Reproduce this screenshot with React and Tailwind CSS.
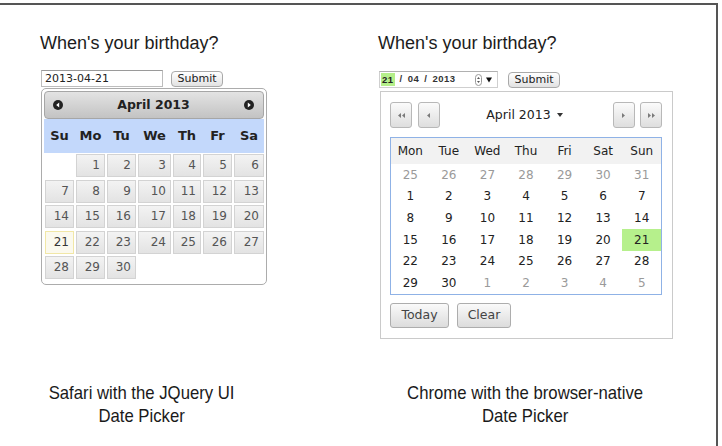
import React from 'react';

const sans = "font-['Liberation_Sans',Arial,sans-serif]";
const verdana = "font-['DejaVu_Sans',Verdana,sans-serif]";

// jQuery UI columns are sized by the table, so "We" ends up wider
const jqCols = 'grid grid-cols-[31px_31px_31px_35px_30px_31px_32px]';

const jqWeekdays = ['Su', 'Mo', 'Tu', 'We', 'Th', 'Fr', 'Sa'];
const jqDays = [null, 1, 2, 3, 4, 5, 6, 7, 8, 9, 10, 11, 12, 13, 14, 15, 16, 17, 18, 19, 20, 21, 22, 23, 24, 25, 26, 27, 28, 29, 30];

const CircleArrow = ({ dir }) => (
  <svg width="10" height="10" viewBox="0 0 10 10">
    <circle cx="5" cy="5" r="5" fill="#222" />
    {dir === 'left'
      ? <path d="M6.2 2.6 L3.2 5 L6.2 7.4 Z" fill="#fff" />
      : <path d="M3.8 2.6 L6.8 5 L3.8 7.4 Z" fill="#fff" />}
  </svg>
);

const JQueryPicker = () => (
  <div className="ml-[41px] w-[226px] pt-[27px] flex flex-col">
    <h1 className={`${sans} -ml-px text-[18px] leading-[22px] text-[#1c1c1c]`}>When's your birthday?</h1>

    <div className="mt-[16px] flex items-start">
      <div className={`${verdana} w-[122px] h-[17px] border border-[#bdbdbd] border-t-[#9a9a9a] pl-[3px] text-[11px] leading-[15px] text-[#222]`}>
        2013-04-21
      </div>
      <div className={`${verdana} ml-[8px] mt-px w-[52px] h-[16px] rounded-[4px] border border-[#a9a9a9] bg-linear-to-b from-white to-[#e2e2e2] text-center text-[11px] leading-[14px] text-[#222]`}>
        Submit
      </div>
    </div>

    <div className={`${verdana} mt-px w-[226px] rounded-[5px] border border-[#acacac] bg-white p-[2px]`}>
      <div className="h-[28px] flex items-center justify-between pl-[8px] pr-[9px] rounded-[4px] border border-[#a6a6a6] bg-linear-to-b from-[#e3e3e3] to-[#c3c3c3]">
        <CircleArrow dir="left" />
        <span className="text-[12.5px] font-bold text-[#222]">April 2013</span>
        <CircleArrow dir="right" />
      </div>

      <div className={`${jqCols} h-[34px] items-center bg-[#c3d8fb]`}>
        {jqWeekdays.map((d) => (
          <span key={d} className="text-center text-[13px] font-bold text-[#222]">{d}</span>
        ))}
      </div>

      <div className={`${jqCols} mt-px mb-[3px] gap-y-[2.5px]`}>
        {jqDays.map((day, i) => {
          if (!day) return <div key={i} />;
          const active = day === 21;
          return (
            <div
              key={i}
              className={`mx-px h-[23px] border pr-[4px] text-right text-[12px] leading-[21px] ${
                active
                  ? 'border-[#f1e7a6] bg-[#fbf9ee] text-[#363636]'
                  : 'border-[#d3d3d3] bg-linear-to-b from-[#f3f3f3] to-[#e3e3e3] text-[#555]'
              }`}
            >
              {day}
            </div>
          );
        })}
      </div>
    </div>
  </div>
);

const nativeWeekdays = ['Mon', 'Tue', 'Wed', 'Thu', 'Fri', 'Sat', 'Sun'];
const nativeDays = [
  ...[25, 26, 27, 28, 29, 30, 31].map((d) => ({ d, muted: true })),
  ...Array.from({ length: 30 }, (_, i) => ({ d: i + 1, muted: false })),
  ...[1, 2, 3, 4, 5].map((d) => ({ d, muted: true })),
];

const NavArrow = ({ dir, double }) => (
  <svg width={double ? 7 : 4} height="5" viewBox={double ? '0 0 7 5' : '0 0 4 5'}>
    {dir === 'left' ? (
      <>
        <path d="M3 0 L0 2.5 L3 5 Z" fill="#7a7a7a" />
        {double && <path d="M7 0 L4 2.5 L7 5 Z" fill="#7a7a7a" />}
      </>
    ) : (
      <>
        <path d="M0 0 L3 2.5 L0 5 Z" fill="#7a7a7a" />
        {double && <path d="M4 0 L7 2.5 L4 5 Z" fill="#7a7a7a" />}
      </>
    )}
  </svg>
);

const NavButton = ({ children }) => (
  <div className="w-[22px] h-[26px] flex items-center justify-center rounded-[3px] border border-[#b8b8b8] bg-linear-to-b from-[#fbfbfb] to-[#dedede]">
    {children}
  </div>
);

const NativePicker = () => (
  <div className="ml-[112px] w-[294px] pt-[27px] flex flex-col">
    <h1 className={`${sans} -ml-px text-[18px] leading-[22px] text-[#1c1c1c]`}>When's your birthday?</h1>

    <div className="mt-[17px] flex items-start">
      <div className="w-[119px] h-[17px] flex items-center border border-[#cfcfcf] border-t-[#b0b0b0] pl-px">
        <span className={`${sans} flex items-center text-[9.5px] font-bold tracking-[0.5px] text-[#333]`}>
          <span className="bg-[#b5ef8a] px-px leading-[13px] text-[#222]">21</span>
          <span className="mx-[5px]">/</span>
          <span>04</span>
          <span className="mx-[5px]">/</span>
          <span>2013</span>
        </span>
        <svg className="ml-[19px]" width="7" height="12" viewBox="0 0 7 12">
          <rect x="0.5" y="0.5" width="6" height="11" rx="3" fill="#fff" stroke="#9a9a9a" />
          <path d="M2 5 L3.5 3 L5 5 Z" fill="#555" />
          <path d="M2 7 L3.5 9 L5 7 Z" fill="#555" />
        </svg>
        <svg className="ml-[4px]" width="6" height="6" viewBox="0 0 6 6">
          <path d="M0 0.5 L6 0.5 L3 5.5 Z" fill="#111" />
        </svg>
      </div>
      <div className={`${verdana} ml-[10px] mt-px w-[52px] h-[16px] rounded-[4px] border border-[#a9a9a9] bg-linear-to-b from-white to-[#e2e2e2] text-center text-[11px] leading-[14px] text-[#222]`}>
        Submit
      </div>
    </div>

    <div className={`${verdana} mt-[3px] ml-px w-[293px] border border-[#cacaca] bg-white pt-[10px] pb-[10px] pl-[9px] pr-[10px]`}>
      <div className="h-[26px] flex items-center">
        <NavButton><NavArrow dir="left" double /></NavButton>
        <div className="ml-[6px]"><NavButton><NavArrow dir="left" /></NavButton></div>
        <div className="flex-1 flex items-center justify-center pr-[4px] text-[12.5px] text-[#222]">
          April 2013
          <svg className="ml-[6px]" width="6" height="4" viewBox="0 0 6 4">
            <path d="M0 0 L6 0 L3 4 Z" fill="#333" />
          </svg>
        </div>
        <NavButton><NavArrow dir="right" /></NavButton>
        <div className="ml-[5px]"><NavButton><NavArrow dir="right" double /></NavButton></div>
      </div>

      <div className="mt-[9px] w-[272px] border border-[#8fb2e6]">
        <div className="grid grid-cols-7 h-[26px] items-center bg-[#f2f2f2]">
          {nativeWeekdays.map((d) => (
            <span key={d} className="text-center text-[12px] text-[#222]">{d}</span>
          ))}
        </div>
        <div className="grid grid-cols-7">
          {nativeDays.map(({ d, muted }, i) => (
            <div
              key={i}
              className={`h-[21.66px] flex items-center justify-center text-[12px] ${
                muted ? 'text-[#9a9a9a]' : 'text-[#222]'
              } ${!muted && d === 21 ? 'bg-[#b6f08c]' : ''}`}
            >
              {d}
            </div>
          ))}
        </div>
      </div>

      <div className="mt-[8px] flex">
        <div className="w-[59px] h-[25px] flex items-center justify-center rounded-[3px] border border-[#adadad] bg-linear-to-b from-[#fafafa] to-[#dcdcdc] text-[12.5px] text-[#444]">
          Today
        </div>
        <div className="ml-[8px] w-[54px] h-[25px] flex items-center justify-center rounded-[3px] border border-[#adadad] bg-linear-to-b from-[#fafafa] to-[#dcdcdc] text-[12.5px] text-[#444]">
          Clear
        </div>
      </div>
    </div>
  </div>
);

export default function App() {
  return (
    <div className="w-[722px] h-[446px] bg-white pt-[3px] overflow-hidden">
      <div className="w-[718px] h-[443px] border-t-2 border-r-2 border-[#555] flex flex-col">
        <div className="flex">
          <JQueryPicker />
          <NativePicker />
        </div>

        {/* captions use a squeezed sans to read as a condensed face */}
        <div className={`mt-[42px] flex ${sans} text-[19px] leading-[23px] text-[#1a1a1a] whitespace-nowrap`}>
          <p className="w-[284px] text-center">
            <span className="inline-block scale-x-[0.88]">Safari with the JQuery UI<br />Date Picker</span>
          </p>
          <p className="ml-[101px] w-[280px] text-center">
            <span className="inline-block scale-x-[0.88]">Chrome with the browser-native<br />Date Picker</span>
          </p>
        </div>
      </div>
    </div>
  );
}
